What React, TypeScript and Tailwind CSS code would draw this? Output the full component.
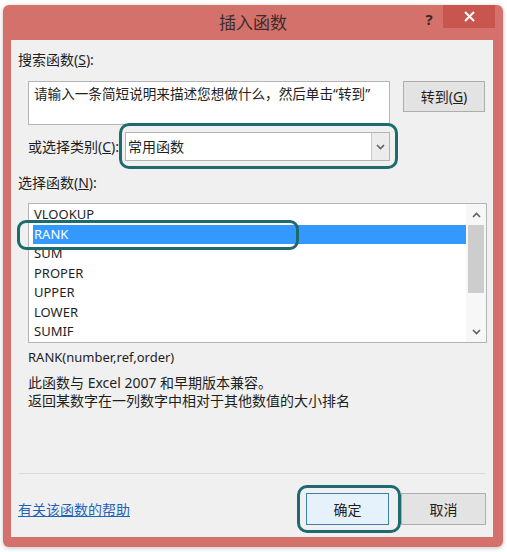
import React from 'react';

const font = { fontFamily: '"Noto Sans", "Noto Sans CJK SC", sans-serif' };

const items = ['VLOOKUP', 'RANK', 'SUM', 'PROPER', 'UPPER', 'LOWER', 'SUMIF'];

const Chevron = ({ up = false }: { up?: boolean }) => (
  <svg width="9" height="6" viewBox="0 0 9 6" className="block">
    <path
      d={up ? 'M1 5 L4.5 1.5 L8 5' : 'M1 1 L4.5 4.5 L8 1'}
      fill="none"
      stroke="#606060"
      strokeWidth="1.6"
    />
  </svg>
);

export default function App() {
  return (
    <div className="w-[507px] h-[552px] bg-white pt-[5px] pl-[3px]" style={font}>
      <div className="w-[500px] h-[542px] rounded-[6px] bg-[#d5716b] shadow-[0_1px_4px_rgba(0,0,0,0.25)] flex flex-col">
        {/* Title bar */}
        <div className="h-[35px] flex items-start">
          <div className="w-[88px] shrink-0" />
          <div className="flex-1 text-center text-[17px] leading-[35px] text-[#3c2c2b]">插入函数</div>
          <div className="w-[88px] shrink-0 flex items-start">
            <span className="w-[28px] mt-[3px] text-center text-[15px] font-bold text-[#3a2a2a]">?</span>
            <div className="w-[52px] h-[23px] bg-[#c9554f] flex items-center justify-center">
              <svg width="11" height="11" viewBox="0 0 11 11">
                <path d="M1 1 L10 10 M10 1 L1 10" stroke="white" strokeWidth="2" />
              </svg>
            </div>
          </div>
        </div>

        {/* Client area */}
        <div className="ml-[8px] mr-[10px] h-[497px] bg-[#f0f0f0] text-[13px] text-[#1e1e1e] flex flex-col">
          <div className="ml-[7px] mt-[11px] leading-[18px] text-[14px]">
            搜索函数(<span className="underline">S</span>):
          </div>

          <div className="flex mt-[12px] ml-[17px]">
            <div className="w-[362px] h-[44px] bg-white border border-[#b4b4b4] px-[5px] pt-[2px] leading-[20px] text-[13.6px] text-[#222]">
              请输入一条简短说明来描述您想做什么，然后单击“转到”
            </div>
            <div className="ml-[13px] w-[82px] h-[31px] bg-[#e3e3e3] border border-[#adadad] flex items-center justify-center text-[14px]">
              转到(<span className="underline">G</span>)
            </div>
          </div>

          <div className="flex items-center mt-[7px] ml-[17px] text-[14px]">
            <span className="w-[97px]">
              或选择类别(<span className="underline">C</span>):
            </span>
            <div className="relative">
              <div className="w-[265px] h-[29px] bg-white border border-[#b4b4b4] flex items-center">
                <span className="flex-1 pl-[2px]">常用函数</span>
                <div className="w-[18px] h-full bg-[#ececec] border-l border-[#c8c8c8] flex items-center justify-center">
                  <Chevron />
                </div>
              </div>
              <div className="absolute left-[-6px] top-[-9px] w-[279px] h-[46px] rounded-[10px] border-[3px] border-[#1d6a70]" />
            </div>
          </div>

          <div className="ml-[7px] mt-[13px] leading-[18px] text-[14px]">
            选择函数(<span className="underline">N</span>):
          </div>

          {/* Function list */}
          <div className="relative ml-[17px] mt-[11px] w-[459px] h-[140px] bg-white border border-[#b4b4b4] flex">
            <div className="flex-1 overflow-hidden pl-[4px]">
              <div className="mt-[1px]">
                {items.map((it) => (
                  <div
                    key={it}
                    className={
                      it === 'RANK'
                        ? 'h-[19.5px] leading-[19.5px] bg-[#3399ff] text-white pl-[1px]'
                        : 'h-[19.5px] leading-[19.5px] pl-[1px] text-[#1e1e1e]'
                    }
                  >
                    {it}
                  </div>
                ))}
              </div>
            </div>
            <div className="w-[20px] flex flex-col items-center bg-[#f7f7f7]">
              <div className="h-[21px] flex items-center justify-center">
                <Chevron up />
              </div>
              <div className="w-[16px] h-[68px] bg-[#cdcdcd]" />
              <div className="flex-1" />
              <div className="h-[21px] flex items-center justify-center">
                <Chevron />
              </div>
            </div>
            <div className="absolute left-[-12px] top-[16px] w-[282px] h-[30px] rounded-[9px] border-[3px] border-[#1d6a70]" />
          </div>

          <div className="ml-[17px] mt-[5px] leading-[18px]">RANK(number,ref,order)</div>
          <div className="ml-[17px] mt-[8px] leading-[18px] text-[14px]">此函数与 Excel 2007 和早期版本兼容。</div>
          <div className="ml-[17px] leading-[18px] text-[14px]">返回某数字在一列数字中相对于其他数值的大小排名</div>

          <div className="flex-1" />
          <div className="mx-[7px] h-px bg-[#dcdcdc]" />

          <div className="flex items-center mt-[19px] mb-[12px] ml-[7px] text-[14px]">
            <span className="text-[#1f64b8] underline flex-1">有关该函数的帮助</span>
            <div className="relative">
              <div className="w-[83px] h-[32px] bg-[#e5f1fb] border border-[#3c7fb1] flex items-center justify-center">
                确定
              </div>
              <div className="absolute left-[-9px] top-[-8px] w-[104px] h-[48px] rounded-[10px] border-[3px] border-[#1d6a70]" />
            </div>
            <div className="ml-[12px] mr-[7px] w-[85px] h-[32px] bg-[#e3e3e3] border border-[#adadad] flex items-center justify-center">
              取消
            </div>
          </div>
        </div>
      </div>
    </div>
  );
}
